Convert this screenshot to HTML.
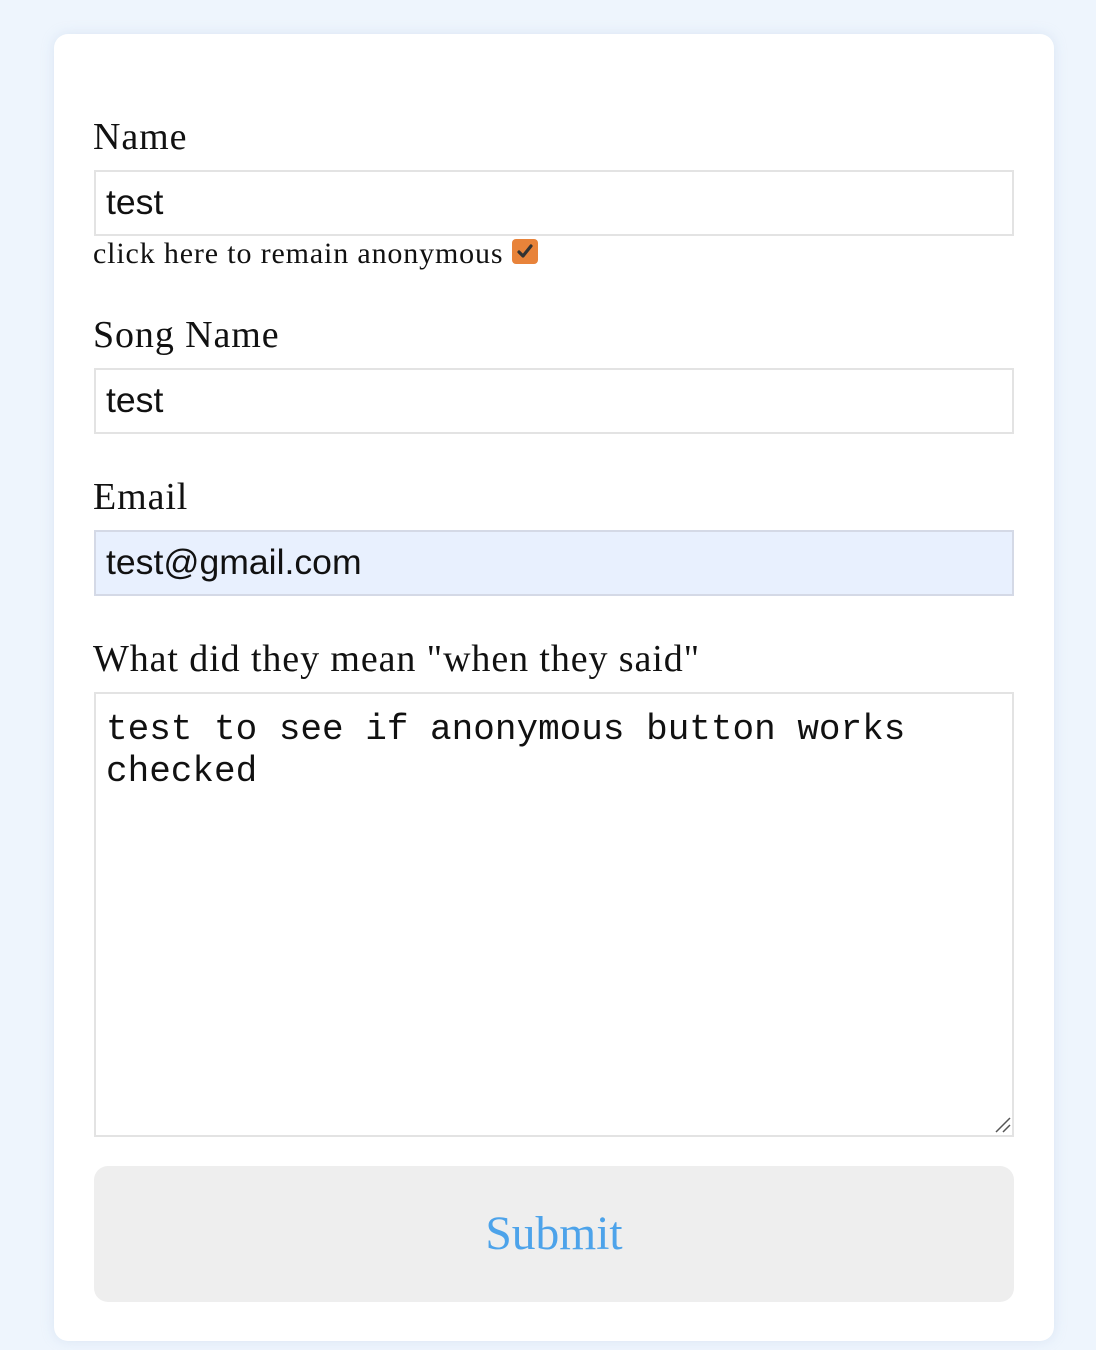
<!DOCTYPE html>
<html><head><style>
html,body{margin:0;padding:0;}
body{width:1096px;height:1350px;background:#eef5fd;position:relative;overflow:hidden;font-family:"Liberation Serif",serif;color:#111;}
.card{position:absolute;left:54px;top:34px;width:1000px;height:1307px;background:#fff;border-radius:14px;box-shadow:0 0 12px rgba(180,200,225,.35);}
.lbl{position:absolute;left:93px;font-size:38px;line-height:36px;letter-spacing:0.9px;white-space:nowrap;}
.inp{position:absolute;left:94px;height:62px;border:2px solid #e3e3e3;background:#fff;font-family:"Liberation Sans",sans-serif;font-size:35.6px;line-height:60px;padding-left:10px;box-sizing:content-box;width:906px;}
.cb{position:absolute;left:93px;top:240px;font-size:30px;line-height:28px;letter-spacing:0.85px;white-space:nowrap;}
.box{position:absolute;left:512px;top:239px;width:26px;height:25px;background:#e8833a;border-radius:4px;}
.ta{position:absolute;left:94px;top:692px;width:906px;height:426px;border:2px solid #e3e3e3;padding:15px 0 0 10px;font-family:"Liberation Mono",monospace;font-size:36px;line-height:42px;white-space:pre;color:#111;}
.btn{position:absolute;left:94px;top:1166px;width:920px;height:136px;background:#eeeeee;border-radius:14px;text-align:center;font-size:47.5px;line-height:136px;color:#4da3ea;}
</style></head><body>
<div class="card"></div>
<div class="lbl" style="top:119px">Name</div>
<div class="inp" style="top:170px">test</div>
<div class="cb">click here to remain anonymous</div>
<div class="box"><svg width="26" height="25" viewBox="0 0 26 25"><path d="M7 13 L11 17 L19 7" stroke="#333" stroke-width="3.2" fill="none" stroke-linecap="round" stroke-linejoin="round"/></svg></div>
<div class="lbl" style="top:317px">Song Name</div>
<div class="inp" style="top:368px">test</div>
<div class="lbl" style="top:479px">Email</div>
<div class="inp" style="top:530px;background:#e8f0fe;border-color:#d4d9e6">test@gmail.com</div>
<div class="lbl" style="top:641px">What did they mean "when they said"</div>
<div class="ta">test to see if anonymous button works
checked</div>
<svg style="position:absolute;left:994px;top:1116px" width="18" height="18"><path d="M2 16 L16 2 M9 16 L16 9" stroke="#555" stroke-width="1.5"/></svg>
<div class="btn">Submit</div>
</body></html>
